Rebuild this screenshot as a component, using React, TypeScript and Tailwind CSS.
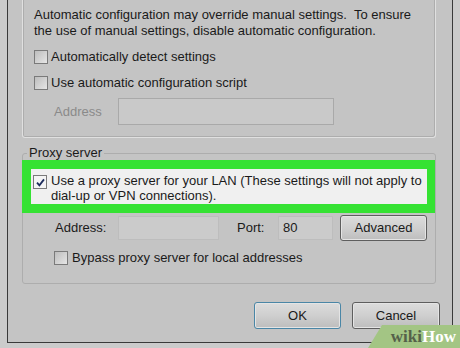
import React from 'react';

const Checkbox: React.FC<{ checked?: boolean }> = ({ checked }) => (
  <span
    className={`flex h-[14px] w-[14px] shrink-0 items-center justify-center border border-[#7a7a7a] ${
      checked ? 'bg-[#f4f4f4]' : 'bg-gradient-to-br from-[#bdbdbd] to-[#e6e6e6]'
    }`}
  >
    {checked && (
      <svg width="11" height="11" viewBox="0 0 11 11">
        <path d="M2 5.6 L4.4 8.3 L9 2.4" fill="none" stroke="#1d2c5c" strokeWidth="1.8" />
      </svg>
    )}
  </span>
);

const Button: React.FC<{ label: string; primary?: boolean; className?: string }> = ({ label, primary, className }) => (
  <div
    className={`flex items-center justify-center rounded-[3px] border bg-gradient-to-b from-[#dcdcdc] via-[#cfcfcf] to-[#bdbdbd] shadow-[inset_0_0_0_1px_#e4e4e4] ${
      primary ? 'border-[#4a86a6]' : 'border-[#5e5e5e]'
    } ${className ?? ''}`}
  >
    {label}
  </div>
);

export default function App() {
  return (
    <div className="relative h-[348px] w-[460px] overflow-hidden bg-[#cbcbcb] font-['Liberation_Sans',Arial,sans-serif] text-[13px] text-[#1a1a1a]">
      {/* Dialog */}
      <div className="ml-[7px] h-[343px] w-[446px] border-x border-b border-[#3a3a3a] bg-[#c4c4c4]">
        {/* Automatic configuration */}
        <div className="ml-[14px] h-[138px] w-[414px] rounded-b-[3px] border-x border-b border-[#e0e0e0] pl-[11px] pt-[7px] shadow-[inset_1px_0_0_#adadad,inset_-1px_-1px_0_#adadad]">
          <p className="leading-[16px]">
            Automatic configuration may override manual settings.{'\u00a0'} To ensure
            <br />
            the use of manual settings, disable automatic configuration.
          </p>
          <div className="mt-[10px] flex h-[16px] items-center gap-[3px]">
            <Checkbox />
            <span>Automatically detect settings</span>
          </div>
          <div className="mt-[10px] flex h-[16px] items-center gap-[3px]">
            <Checkbox />
            <span>Use automatic configuration script</span>
          </div>
          <div className="mt-[7px] flex h-[27px] items-center">
            <span className="ml-[20px] w-[64px] text-[#8a8a8a]">Address</span>
            <div className="h-[27px] w-[216px] border border-[#a9a9a9] bg-[#c9c9c9]" />
          </div>
        </div>

        {/* Proxy server */}
        <fieldset className="ml-[14px] mt-[8px] h-[138px] w-[414px] rounded-[3px] border border-[#adadad]">
          <legend className="ml-[4px] px-[2px] leading-[14px]">Proxy server</legend>
          <div className="-ml-[1px] h-[53px] w-[413px] border-[9px] border-r-[8px] border-[#35e233]">
            <div className="flex h-full items-start bg-[#f0f0f0] pl-[2px] pt-[4px]">
              <span className="mt-[2px]">
                <Checkbox checked />
              </span>
              <p className="ml-[4px] leading-[15px]">
                Use a proxy server for your LAN (These settings will not apply to
                <br />
                dial-up or VPN connections).
              </p>
            </div>
          </div>
          <div className="mt-[2px] flex h-[26px] items-center">
            <span className="ml-[32px] w-[63px]">Address:</span>
            <div className="h-[24px] w-[101px] border border-[#bdbdbd] bg-[#cbcbcb]" />
            <span className="ml-[18px] w-[41px]">Port:</span>
            <div className="flex h-[24px] w-[55px] items-start border border-[#bdbdbd] bg-[#cbcbcb] pl-[4px] pt-[1px]">80</div>
            <Button label="Advanced" className="ml-[7px] h-[26px] w-[87px]" />
          </div>
          <div className="ml-[31px] mt-[9px] flex h-[16px] items-center gap-[4px]">
            <Checkbox />
            <span>Bypass proxy server for local addresses</span>
          </div>
        </fieldset>

        <div className="mt-[18px] flex gap-[11px] pl-[246px]">
          <Button label="OK" primary className="h-[27px] w-[87px]" />
          <Button label="Cancel" className="h-[27px] w-[88px]" />
        </div>
      </div>

      {/* watermark */}
      <div className="absolute bottom-0 right-0 flex h-[23px] w-[92px] items-end justify-end bg-[#a3c584] pb-[1px] pr-[4px] font-['Liberation_Serif',serif] text-[17px] font-bold leading-[20px] [clip-path:polygon(14px_0,100%_0,100%_100%,0_100%)]">
        <span className="text-[#55614a]">wiki</span>
        <span className="text-white">How</span>
      </div>
    </div>
  );
}
